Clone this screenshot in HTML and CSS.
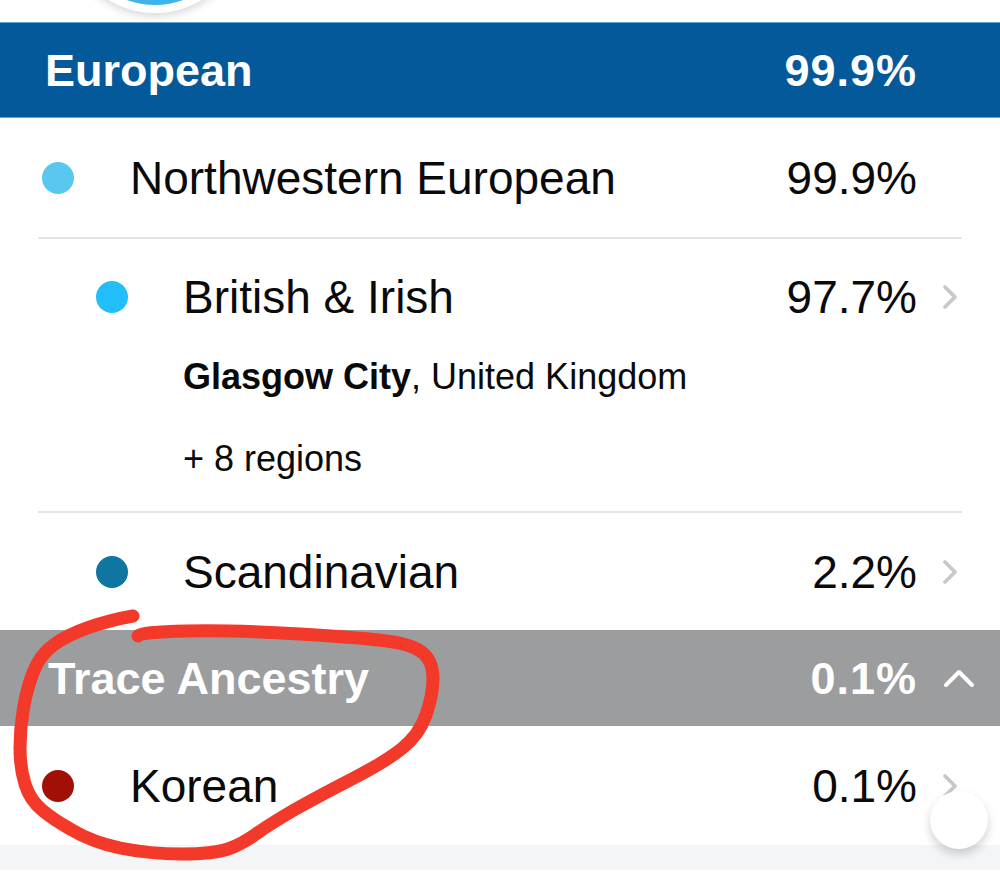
FILE: index.html
```html
<!DOCTYPE html>
<html lang="en">
<head>
<meta charset="utf-8">
<title>Ethnicity estimate</title>
<link rel="stylesheet" href="styles.css">
</head>
<body>
<div class="page">
  <div class="top"><div class="avatar"></div></div>

  <div class="group group-blue">
    <span class="gname">European</span>
    <span class="gpct">99.9%</span>
    <span class="gside"></span>
  </div>

  <div class="row lvl1 h119">
    <span class="dotcell"><span class="dot dot-nw"></span></span>
    <span class="name">Northwestern European</span>
    <span class="pct">99.9%</span>
    <span class="chev"></span>
  </div>
  <div class="divider"></div>

  <div class="block">
    <div class="row lvl2 h78">
      <span class="dotcell"><span class="dot dot-bi"></span></span>
      <span class="name">British &amp; Irish</span>
      <span class="pct">97.7%</span>
      <span class="chev"><svg width="16" height="26" viewBox="0 0 16 26"><path d="M3 3 L13 13 L3 23" fill="none" stroke="#c7c7cc" stroke-width="3.8" stroke-linecap="round" stroke-linejoin="round"/></svg></span>
    </div>
    <div class="meta"><b>Glasgow City</b>, United Kingdom</div>
    <div class="meta">+ 8 regions</div>
  </div>
  <div class="divider"></div>

  <div class="row lvl2 h117">
    <span class="dotcell"><span class="dot dot-sc"></span></span>
    <span class="name">Scandinavian</span>
    <span class="pct">2.2%</span>
    <span class="chev"><svg width="16" height="26" viewBox="0 0 16 26"><path d="M3 3 L13 13 L3 23" fill="none" stroke="#c7c7cc" stroke-width="3.8" stroke-linecap="round" stroke-linejoin="round"/></svg></span>
  </div>

  <div class="group group-gray">
    <span class="gname">Trace Ancestry</span>
    <span class="gpct">0.1%</span>
    <span class="gside"><svg width="32" height="20" viewBox="0 0 32 20"><path d="M3 17 L16 4 L29 17" fill="none" stroke="#fff" stroke-width="4" stroke-linecap="round" stroke-linejoin="round"/></svg></span>
  </div>

  <div class="row lvl1 h119">
    <span class="dotcell"><span class="dot dot-ko"></span></span>
    <span class="name">Korean</span>
    <span class="pct">0.1%</span>
    <span class="chev"><svg width="16" height="26" viewBox="0 0 16 26"><path d="M3 3 L13 13 L3 23" fill="none" stroke="#c7c7cc" stroke-width="3.8" stroke-linecap="round" stroke-linejoin="round"/></svg></span>
  </div>

  <div class="band"></div>

  <div class="fab"></div>

  <svg class="scribble" width="1000" height="881" viewBox="0 0 1000 881">
    <path d="M133 616 Q110 620 88.5 627.5 Q67 635 53.5 645 Q40 655 33.5 671.5 Q27 688 23.5 708 Q20 728 20 748 Q20 768 25 784 Q30 800 42 810 Q54 820 72 830 Q92 842 120 848 Q150 854 182 854 Q213 854 228 849 Q242 844 256 834 Q270 824 294 810 Q319 796 352 779 Q385 762 402 748.5 Q419 735 426 715 Q433 695 433 678.5 Q433 662 423.5 653.5 Q414 645 390 641.5 Q367 638 300 634 Q233 630 186.5 631 Q140 632 138 636" fill="none" stroke="#f33a2a" stroke-width="13" stroke-linecap="round" stroke-linejoin="round"/>
  </svg>
</div>
</body>
</html>
```

FILE: styles.css
```css
html, body {
  margin: 0;
  padding: 0;
  background: #fff;
}
body {
  font-family: "Liberation Sans", Arial, sans-serif;
  color: #0a0a0a;
}
.page {
  position: relative;
  width: 1000px;
  height: 881px;
  overflow: hidden;
}
.top {
  position: relative;
  height: 22px;
  overflow: hidden;
}
.avatar {
  position: absolute;
  left: 65px;
  top: -167px;
  width: 164px;
  height: 164px;
  border-radius: 50%;
  background: #3db4ea;
  border: 8px solid #fff;
  box-shadow: 0 3px 8px rgba(0, 0, 0, 0.16);
}
.group {
  height: 96px;
  display: flex;
  align-items: center;
  color: #fff;
  font-weight: 700;
  font-size: 45px;
  line-height: 1;
  padding-left: 45px;
}
.group-blue {
  background: #04599b;
  box-shadow: inset 0 1px 0 #5fa6d6, inset 0 -1px 0 #5fa6d6;
}
.group-gray {
  background: #9b9d9f;
  padding-left: 48px;
}
.gname {
  flex: 1;
}
.gpct {
  letter-spacing: 1px;
}
.gside {
  width: 83px;
  display: flex;
  align-items: center;
  padding-left: 26px;
  box-sizing: border-box;
}
.row {
  display: flex;
  align-items: center;
  font-size: 46px;
  line-height: 1;
}
.h119 { height: 119px; }
.h117 { height: 117px; }
.h78 { height: 78px; }
.lvl1 { padding-left: 42px; }
.lvl1 .dotcell { width: 88px; }
.lvl2 { padding-left: 96px; }
.lvl2 .dotcell { width: 87px; }
.dotcell {
  display: flex;
  align-items: center;
}
.dot {
  width: 32px;
  height: 32px;
  border-radius: 50%;
}
.dot-nw { background: #5ac8ee; }
.dot-bi { background: #22befa; }
.dot-sc { background: #0e76a1; }
.dot-ko { background: #a10f07; }
.name {
  flex: 1;
}
.chev {
  width: 83px;
  box-sizing: border-box;
  padding-left: 25px;
  display: flex;
  align-items: center;
}
.divider {
  height: 2px;
  margin: 0 38px;
  background: #e4e4e4;
}
.block {
  padding-top: 19px;
  padding-bottom: 11px;
}
.meta {
  padding-left: 183px;
  font-size: 36px;
  line-height: 82px;
}
.meta b {
  font-weight: 700;
}
.band {
  height: 25px;
  background: #f3f5f6;
}
.fab {
  position: absolute;
  left: 930px;
  top: 791px;
  width: 58px;
  height: 58px;
  border-radius: 50%;
  background: #fff;
  box-shadow: 0 5px 10px rgba(0, 0, 0, 0.18);
}
.scribble {
  position: absolute;
  left: 0;
  top: 0;
  pointer-events: none;
}
```
